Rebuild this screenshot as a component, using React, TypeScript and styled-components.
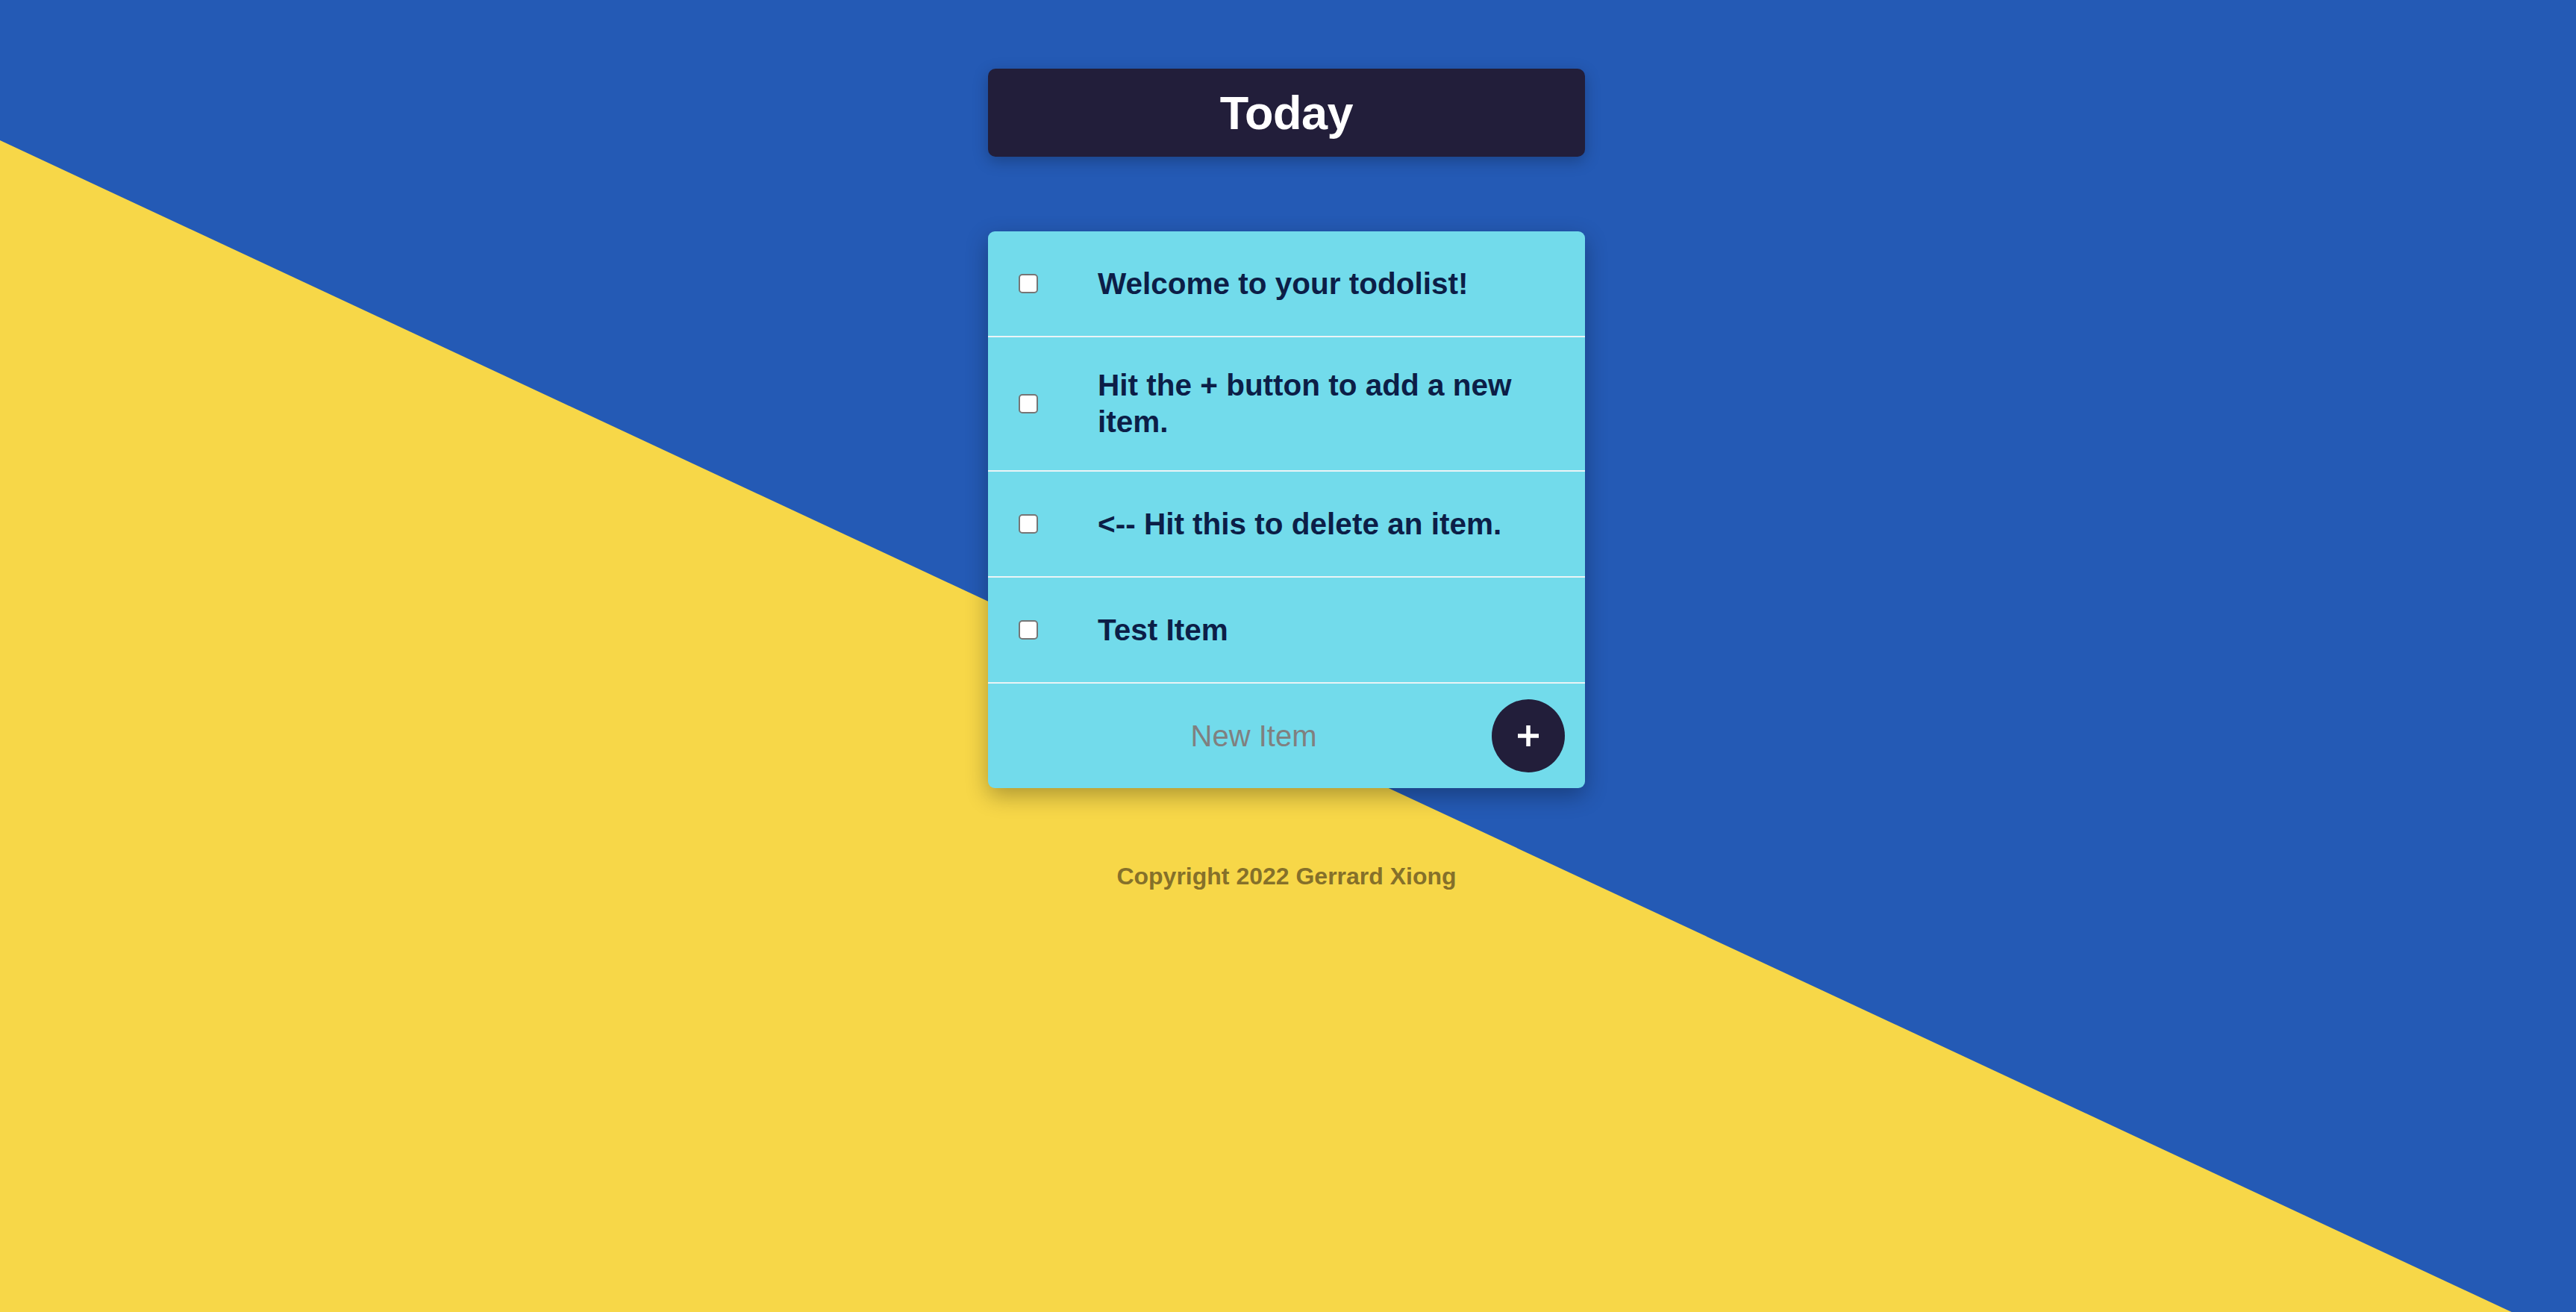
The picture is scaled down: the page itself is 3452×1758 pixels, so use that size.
import React from "react";
import styled, { createGlobalStyle } from "styled-components";

const GlobalStyle = createGlobalStyle`
  *, *::before, *::after { box-sizing: border-box; }
  html, body { margin: 0; padding: 0; }
  body { font-family: "Liberation Sans", Arial, Helvetica, sans-serif; }
`;

const Page = styled.div`
  position: relative;
  min-height: 100vh;
  overflow: hidden;
  background: #245ab5;
  display: flex;
  flex-direction: column;
  align-items: center;
  padding-top: 92px;

  &::before {
    content: "";
    position: absolute;
    inset: 0;
    background: #f7d748;
    clip-path: polygon(0 10.7%, 97.5% 100%, 0 100%);
    z-index: 0;
  }
`;

const Content = styled.main`
  position: relative;
  z-index: 1;
  display: flex;
  flex-direction: column;
  align-items: center;
  margin-right: 4px;
`;

const Heading = styled.header`
  width: 800px;
  height: 118px;
  background: #221e3a;
  border-radius: 10px;
  box-shadow: 0 6px 20px rgba(0, 0, 0, 0.25);
  display: flex;
  align-items: center;
  justify-content: center;
`;

const Title = styled.h1`
  margin: 0;
  color: #ffffff;
  font-size: 63px;
  font-weight: 700;
  letter-spacing: -0.5px;
`;

const Card = styled.section`
  width: 800px;
  margin-top: 100px;
  background: #72dbeb;
  border-radius: 9px;
  overflow: hidden;
  box-shadow: 0 10px 30px rgba(0, 0, 0, 0.3);
`;

const ItemRow = styled.div`
  display: flex;
  align-items: center;
  min-height: 142px;
  padding: 40px 40px 40px 41px;
  border-bottom: 2px solid #eaf4f6;
`;

const Check = styled.input.attrs({ type: "checkbox" })`
  appearance: none;
  flex: none;
  width: 26px;
  height: 26px;
  margin: 0;
  background: #ffffff;
  border: 2px solid #767676;
  border-radius: 5px;
`;

const ItemText = styled.p`
  margin: 0 0 0 80px;
  color: #0c1e47;
  font-size: 40.5px;
  font-weight: 700;
  line-height: 49px;
`;

const FormRow = styled.form`
  display: flex;
  align-items: center;
  height: 140px;
  padding: 0 27px 0 37px;
`;

const NewInput = styled.input`
  flex: 1;
  min-width: 0;
  border: none;
  outline: none;
  background: transparent;
  text-align: center;
  font-family: "Liberation Sans", Arial, Helvetica, sans-serif;
  font-size: 40px;
  color: #0c1e47;
  &::placeholder { color: #808080; }
`;

const AddButton = styled.button`
  flex: none;
  width: 98px;
  height: 98px;
  border-radius: 50%;
  border: none;
  padding: 0;
  background: #221e3a;
  display: flex;
  align-items: center;
  justify-content: center;
  cursor: pointer;
`;

const Footer = styled.footer`
  margin-top: 100px;
  color: #85702a;
  font-size: 32px;
  font-weight: 700;
`;

const items = [
  "Welcome to your todolist!",
  "Hit the + button to add a new item.",
  "<-- Hit this to delete an item.",
  "Test Item",
];

export default function App() {
  return (
    <>
      <GlobalStyle />
      <Page>
        <Content>
          <Heading>
            <Title>Today</Title>
          </Heading>
          <Card>
            {items.map((t) => (
              <ItemRow key={t}>
                <Check />
                <ItemText>{t}</ItemText>
              </ItemRow>
            ))}
            <FormRow onSubmit={(e) => e.preventDefault()}>
              <NewInput placeholder="New Item" />
              <AddButton type="submit" aria-label="Add">
                <svg width="30" height="30" viewBox="0 0 30 30">
                  <path d="M15 1v28M1 15h28" stroke="#ffffff" strokeWidth="5.5" fill="none" />
                </svg>
              </AddButton>
            </FormRow>
          </Card>
          <Footer>Copyright 2022 Gerrard Xiong</Footer>
        </Content>
      </Page>
    </>
  );
}
